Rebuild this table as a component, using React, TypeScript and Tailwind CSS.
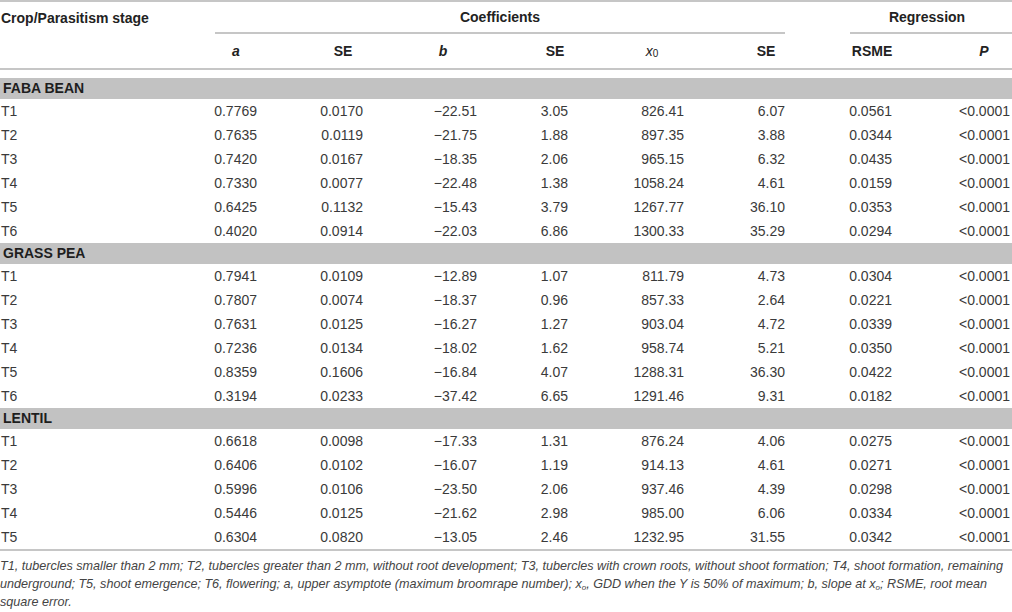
import React from "react";

type Row = [string, string, string, string, string, string, string, string, string];

const sections: { name: string; rows: Row[] }[] = [
  {
    name: "FABA BEAN",
    rows: [
      ["T1", "0.7769", "0.0170", "\u221222.51", "3.05", "826.41", "6.07", "0.0561", "<0.0001"],
      ["T2", "0.7635", "0.0119", "\u221221.75", "1.88", "897.35", "3.88", "0.0344", "<0.0001"],
      ["T3", "0.7420", "0.0167", "\u221218.35", "2.06", "965.15", "6.32", "0.0435", "<0.0001"],
      ["T4", "0.7330", "0.0077", "\u221222.48", "1.38", "1058.24", "4.61", "0.0159", "<0.0001"],
      ["T5", "0.6425", "0.1132", "\u221215.43", "3.79", "1267.77", "36.10", "0.0353", "<0.0001"],
      ["T6", "0.4020", "0.0914", "\u221222.03", "6.86", "1300.33", "35.29", "0.0294", "<0.0001"],
    ],
  },
  {
    name: "GRASS PEA",
    rows: [
      ["T1", "0.7941", "0.0109", "\u221212.89", "1.07", "811.79", "4.73", "0.0304", "<0.0001"],
      ["T2", "0.7807", "0.0074", "\u221218.37", "0.96", "857.33", "2.64", "0.0221", "<0.0001"],
      ["T3", "0.7631", "0.0125", "\u221216.27", "1.27", "903.04", "4.72", "0.0339", "<0.0001"],
      ["T4", "0.7236", "0.0134", "\u221218.02", "1.62", "958.74", "5.21", "0.0350", "<0.0001"],
      ["T5", "0.8359", "0.1606", "\u221216.84", "4.07", "1288.31", "36.30", "0.0422", "<0.0001"],
      ["T6", "0.3194", "0.0233", "\u221237.42", "6.65", "1291.46", "9.31", "0.0182", "<0.0001"],
    ],
  },
  {
    name: "LENTIL",
    rows: [
      ["T1", "0.6618", "0.0098", "\u221217.33", "1.31", "876.24", "4.06", "0.0275", "<0.0001"],
      ["T2", "0.6406", "0.0102", "\u221216.07", "1.19", "914.13", "4.61", "0.0271", "<0.0001"],
      ["T3", "0.5996", "0.0106", "\u221223.50", "2.06", "937.46", "4.39", "0.0298", "<0.0001"],
      ["T4", "0.5446", "0.0125", "\u221221.62", "2.98", "985.00", "6.06", "0.0334", "<0.0001"],
      ["T5", "0.6304", "0.0820", "\u221213.05", "2.46", "1232.95", "31.55", "0.0342", "<0.0001"],
    ],
  },
];

const GRID =
  "grid grid-cols-[195px_62px_106px_114px_91px_116px_101px_107px_118px]";

function HeadCell({ w, children }: { w: string; children: React.ReactNode }) {
  return (
    <div className="flex justify-end">
      <div className={`${w} flex justify-center whitespace-nowrap`}>{children}</div>
    </div>
  );
}

export default function App() {
  return (
    <div
      className="w-[1012px] h-[612px] bg-white text-[14px] text-[#3a3a3a] overflow-hidden"
      style={{ fontFamily: '"Liberation Sans", Arial, Helvetica, sans-serif' }}
    >
      <div className="border-t-2 border-[#c6c6c6]">
        {/* header row 1 */}
        <div className={`${GRID} h-[32px] font-bold text-[#222]`}>
          <div className="flex items-center pl-[1px] whitespace-nowrap">Crop/Parasitism stage</div>
          <div className="col-span-6 pl-[20px] flex flex-col">
            <div className="flex-1 flex items-center justify-center">Coefficients</div>
            <div className="border-b-2 border-[#c6c6c6]" />
          </div>
          <div className="col-span-2 pl-[65px] mr-[-2px] flex flex-col">
            <div className="flex-1 flex items-center justify-center pr-[8px]">Regression</div>
            <div className="border-b-2 border-[#c6c6c6]" />
          </div>
        </div>
        {/* header row 2 */}
        <div className={`${GRID} h-[36px] items-center font-bold text-[#222] border-b-2 border-[#c6c6c6]`}>
          <div />
          <HeadCell w="w-[42px]"><i>a</i></HeadCell>
          <HeadCell w="w-[40px]">SE</HeadCell>
          <HeadCell w="w-[68px]"><i>b</i></HeadCell>
          <HeadCell w="w-[26px]">SE</HeadCell>
          <HeadCell w="w-[64px]">
            <span className="font-normal italic">x</span>
            <span className="font-normal text-[10px] relative top-[5px]">0</span>
          </HeadCell>
          <HeadCell w="w-[38px]">SE</HeadCell>
          <HeadCell w="w-[40px]">RSME</HeadCell>
          <HeadCell w="w-[52px]"><i>P</i></HeadCell>
        </div>
        <div className="h-[8px]" />
        {sections.map((s) => (
          <div key={s.name}>
            <div className="h-[21px] bg-[#c2c2c2] flex items-center pl-[3px] font-bold text-[#1e1e1e]">
              {s.name}
            </div>
            {s.rows.map((r, i) => (
              <div key={i} className={`${GRID} h-[24px] items-center`}>
                <div className="pl-[1px]">{r[0]}</div>
                {r.slice(1).map((v, j) => (
                  <div key={j} className="text-right whitespace-nowrap">
                    {v}
                  </div>
                ))}
              </div>
            ))}
          </div>
        ))}
        <div className="border-b-2 border-[#c6c6c6]" />
      </div>
      <div className="pt-[6px] text-[12.6px] leading-[18px] italic text-[#444] whitespace-nowrap">
        T1, tubercles smaller than 2 mm; T2, tubercles greater than 2 mm, without root development; T3, tubercles with crown roots, without shoot formation; T4, shoot formation, remaining
        <br />
        underground; T5, shoot emergence; T6, flowering; a, upper asymptote (maximum broomrape number); x
        <sub className="text-[8px]">o</sub>, GDD when the Y is 50% of maximum; b, slope at x
        <sub className="text-[8px]">o</sub>; RSME, root mean
        <br />
        square error.
      </div>
    </div>
  );
}
